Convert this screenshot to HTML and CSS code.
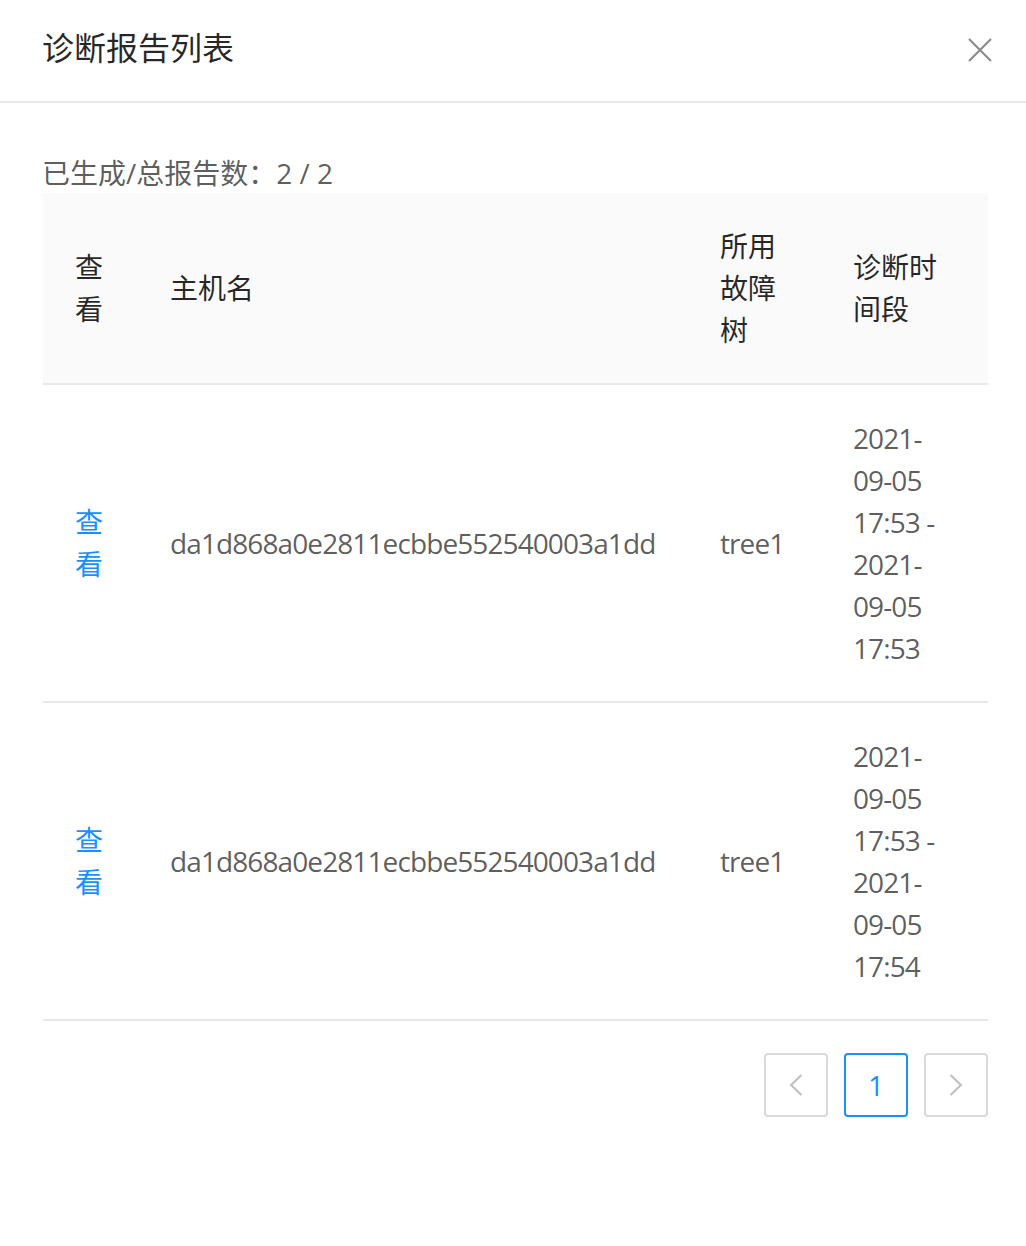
FILE: index.html
```html
<!DOCTYPE html>
<html lang="zh-CN">
<head>
<meta charset="utf-8">
<title>诊断报告列表</title>
<link rel="stylesheet" href="styles.css">
</head>
<body>
<div class="modal">
  <div class="modal-header">
    <div class="modal-title">诊断报告列表</div>
    <button class="modal-close" aria-label="关闭">
      <svg width="24" height="24" viewBox="0 0 24 24"><path d="M1 1 L23 23 M23 1 L1 23" stroke="#8c8c8c" stroke-width="2.2" fill="none"/></svg>
    </button>
  </div>
  <div class="modal-body">
    <div class="count">已生成/总报告数：2 / 2</div>
    <table class="report-table">
      <colgroup>
        <col class="c-action">
        <col class="c-host">
        <col class="c-tree">
        <col class="c-time">
      </colgroup>
      <thead>
        <tr>
          <th>查看</th>
          <th>主机名</th>
          <th>所用故障树</th>
          <th>诊断时间段</th>
        </tr>
      </thead>
      <tbody>
        <tr>
          <td><a class="link" href="#">查看</a></td>
          <td class="latin">da1d868a0e2811ecbbe552540003a1dd</td>
          <td class="latin">tree1</td>
          <td class="latin">2021-<wbr>09-05 17:53 - 2021-<wbr>09-05 17:53</td>
        </tr>
        <tr>
          <td><a class="link" href="#">查看</a></td>
          <td class="latin">da1d868a0e2811ecbbe552540003a1dd</td>
          <td class="latin">tree1</td>
          <td class="latin">2021-<wbr>09-05 17:53 - 2021-<wbr>09-05 17:54</td>
        </tr>
      </tbody>
    </table>
    <ul class="pagination">
      <li class="page-btn disabled">
        <svg width="14" height="22" viewBox="0 0 14 22"><path d="M12.5 1 L2 11 L12.5 21" stroke="#bfbfbf" stroke-width="2" fill="none"/></svg>
      </li>
      <li class="page-btn active">1</li>
      <li class="page-btn disabled">
        <svg width="14" height="22" viewBox="0 0 14 22"><path d="M1.5 1 L12 11 L1.5 21" stroke="#bfbfbf" stroke-width="2" fill="none"/></svg>
      </li>
    </ul>
  </div>
</div>
</body>
</html>
```
FILE: styles.css
```css
html, body {
  margin: 0;
  padding: 0;
  background: #fff;
}
body {
  font-family: "Open Sans", "Noto Sans CJK SC", sans-serif;
  font-size: 28px;
  color: rgba(0, 0, 0, 0.65);
}
.modal {
  width: 1026px;
}
.modal-header {
  display: flex;
  align-items: center;
  justify-content: space-between;
  padding: 26px 34px 31px 42px;
  border-bottom: 2px solid #e8e8e8;
}
.modal-title {
  font-size: 32px;
  line-height: 44px;
  color: rgba(0, 0, 0, 0.85);
}
.modal-close {
  width: 24px;
  height: 24px;
  padding: 0;
  margin-top: 4px;
  border: 0;
  background: none;
  display: flex;
}
.modal-body {
  padding: 50px 38px 0 43px;
}
.count {
  line-height: 40px;
  color: rgba(0, 0, 0, 0.65);
  margin-left: -1px;
}
.report-table {
  width: 945px;
  table-layout: fixed;
  border-collapse: separate;
  border-spacing: 0;
}
.c-action { width: 95px; }
.c-host { width: 550px; }
.c-tree { width: 133px; }
.c-time { width: 167px; }
.report-table th,
.report-table td {
  padding: 32px;
  line-height: 42px;
  text-align: left;
  vertical-align: middle;
  border-bottom: 2px solid #e8e8e8;
}
.report-table th {
  font-weight: normal;
  color: rgba(0, 0, 0, 0.85);
  background: #fafafa;
}
.report-table td {
  color: rgba(0, 0, 0, 0.65);
}
.report-table td.latin {
  letter-spacing: -0.9px;
}
.link {
  color: #1890ff;
  text-decoration: none;
}
.pagination {
  list-style: none;
  margin: 32px 0 0;
  padding: 0;
  display: flex;
  justify-content: flex-end;
  gap: 16px;
}
.page-btn {
  box-sizing: border-box;
  width: 64px;
  height: 64px;
  border: 2px solid #d9d9d9;
  border-radius: 4px;
  display: flex;
  align-items: center;
  justify-content: center;
  font-size: 28px;
  color: rgba(0, 0, 0, 0.65);
}
.page-btn.active {
  border-color: #1890ff;
  color: #1890ff;
}
```
